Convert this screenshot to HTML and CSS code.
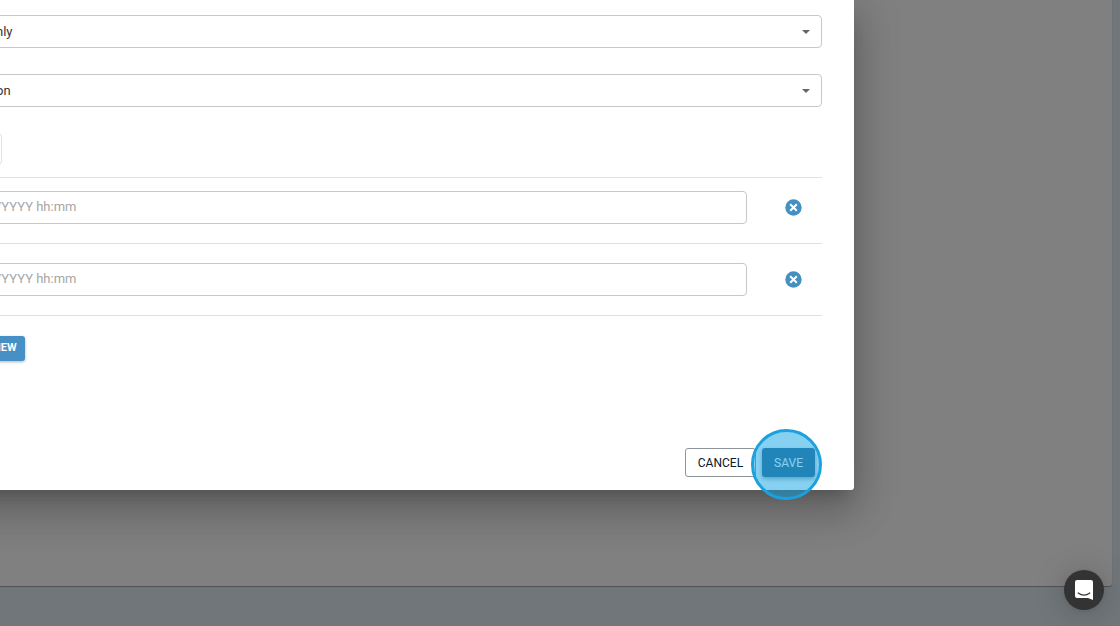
FILE: index.html
```html
<!DOCTYPE html>
<html lang="en">
<head>
    <meta charset="UTF-8">
    <meta name="viewport" content="width=device-width, initial-scale=1.0">
    <title>Schedule</title>
    <link rel="stylesheet" href="styles.css">
</head>
<body>
    <div class="page">
        <div class="page__card"></div>
    </div>

    <div class="overlay">
        <form class="dialog">
            <div class="select">
                <select class="field" aria-label="Access">
                    <option>nly</option>
                </select>
                <svg class="select__arrow" viewBox="0 0 8 4"><path d="M0 0h8L4 4z"/></svg>
            </div>
            <div class="select">
                <select class="field" aria-label="Type">
                    <option>on</option>
                </select>
                <svg class="select__arrow" viewBox="0 0 8 4"><path d="M0 0h8L4 4z"/></svg>
            </div>
            <button type="button" class="chip" aria-label="Option"></button>

            <div class="dates">
                <div class="dates__row">
                    <input class="field" type="text" placeholder="/YYYY hh:mm" aria-label="Date">
                    <button type="button" class="remove" aria-label="Remove">
                        <svg viewBox="0 0 17 17"><circle cx="8.5" cy="8.5" r="8.2"/><path d="M5.2 5.2l6.6 6.6M11.8 5.2l-6.6 6.6"/></svg>
                    </button>
                </div>
                <div class="dates__row dates__row--tall">
                    <input class="field" type="text" placeholder="/YYYY hh:mm" aria-label="Date">
                    <button type="button" class="remove" aria-label="Remove">
                        <svg viewBox="0 0 17 17"><circle cx="8.5" cy="8.5" r="8.2"/><path d="M5.2 5.2l6.6 6.6M11.8 5.2l-6.6 6.6"/></svg>
                    </button>
                </div>
            </div>
            <button type="button" class="btn btn--new">NEW</button>

            <div class="actions">
                <button type="button" class="btn btn--cancel">CANCEL</button>
                <div class="actions__save">
                    <button type="button" class="btn btn--save">SAVE</button>
                    <span class="highlight"></span>
                </div>
            </div>
        </form>
    </div>

    <button type="button" class="chat" aria-label="Open chat">
        <svg viewBox="0 0 18 20">
            <path class="chat__bubble" d="M2 0h14a2 2 0 0 1 2 2v18l-5-2H2a2 2 0 0 1-2-2V2a2 2 0 0 1 2-2z"/>
            <path class="chat__smile" d="M3.200 13c3.500 2.600 8.100 2.600 11.600 0"/>
        </svg>
    </button>
</body>
</html>
```

FILE: styles.css
```css
* { box-sizing: border-box; }

body {
  margin: 0;
  height: 100vh;
  overflow: hidden;
  background: #70767a;
  font-family: Roboto, sans-serif;
  font-size: 13px;
}

button {
  font-family: inherit;
  padding: 0;
  border: 0;
  cursor: pointer;
}

.page {
  height: 100vh;
  padding: 0 8px 40px 0;
}

.page__card {
  height: 100%;
  background: #808080;
  border-radius: 0 0 3px 0;
  box-shadow: 0 1px 1px #505054;
}

.overlay {
  position: absolute;
  inset: 0;
  overflow: hidden;
  padding-right: 266px;
}

/* the dialog runs off the left side of the window */
.dialog {
  margin-left: -96px;
  padding: 15px 32px 13px 80px;
  background: #fff;
  border-radius: 0 0 3px 0;
  box-shadow: 0 11px 15px -7px rgba(0, 0, 0, 0.2),
              0 24px 38px 3px rgba(0, 0, 0, 0.14),
              0 9px 46px 8px rgba(0, 0, 0, 0.12);
}

.field {
  display: block;
  width: 100%;
  height: 33px;
  padding: 0 11px;
  border: 1px solid #c8c8c8;
  border-radius: 4px;
  background: #fff;
  color: #333;
  font-family: inherit;
  font-size: 13px;
  appearance: none;
}

.field::placeholder { color: #a6a6a6; }

.select {
  position: relative;
  margin-bottom: 26px;
}

.select__arrow {
  position: absolute;
  right: 12px;
  top: 15px;
  width: 8px;
  height: 4px;
  fill: #666;
}

.chip {
  display: block;
  width: 18px;
  height: 32px;
  margin-bottom: 12px;
  background: #fff;
  border: 1px solid #e2e2e2;
  border-radius: 4px;
}

.dates { border-top: 1px solid #e0e0e0; }

.dates__row {
  display: flex;
  align-items: center;
  gap: 38px;
  padding: 13px 20px 19px 0;
  border-bottom: 1px solid #e0e0e0;
}

.dates__row--tall { padding-top: 19px; }

.dates .field {
  flex: 1;
  padding-bottom: 2px;
}

.remove {
  width: 17px;
  height: 17px;
  background: none;
}

.remove svg { display: block; }
.remove circle { fill: #4690c1; }

.remove path {
  stroke: #fff;
  stroke-width: 2;
}

.btn {
  display: block;
  height: 29px;
  border-radius: 3px;
  font-size: 12px;
  font-weight: 400;
}

.btn--new {
  height: 25px;
  margin: 20px 0 87px;
  padding: 0 8px 2px 9px;
  background: #4690c6;
  color: #fff;
  font-size: 11px;
  font-weight: 700;
  box-shadow: 0 1px 3px rgba(0, 0, 0, 0.3);
}

.actions {
  display: flex;
  justify-content: flex-end;
  gap: 6px;
  padding-right: 7px;
}

.btn--cancel {
  padding: 0 12px;
  border: 1px solid #8d959b;
  background: #fff;
  color: #04202f;
}

.actions__save { position: relative; }

.btn--save {
  padding: 0 12px;
  background: #37678f;
  color: #fff;
  box-shadow: 0 2px 4px rgba(0, 0, 0, 0.35);
}

.highlight {
  position: absolute;
  right: -7px;
  top: -19px;
  width: 71px;
  height: 71px;
  border: 3px solid #1da1de;
  border-radius: 50%;
  background: rgba(13, 163, 229, 0.5);
  pointer-events: none;
}

.chat {
  position: fixed;
  right: 16px;
  bottom: 16px;
  width: 40px;
  height: 40px;
  display: flex;
  align-items: center;
  justify-content: center;
  border-radius: 50%;
  background: #333;
  box-shadow: 0 1px 6px rgba(0, 0, 0, 0.1), 0 2px 32px rgba(0, 0, 0, 0.2);
}

.chat svg {
  width: 18px;
  height: 20px;
}

.chat__bubble { fill: #fff; }

.chat__smile {
  fill: none;
  stroke: #333;
  stroke-width: 1.2;
  stroke-linecap: round;
}
```
